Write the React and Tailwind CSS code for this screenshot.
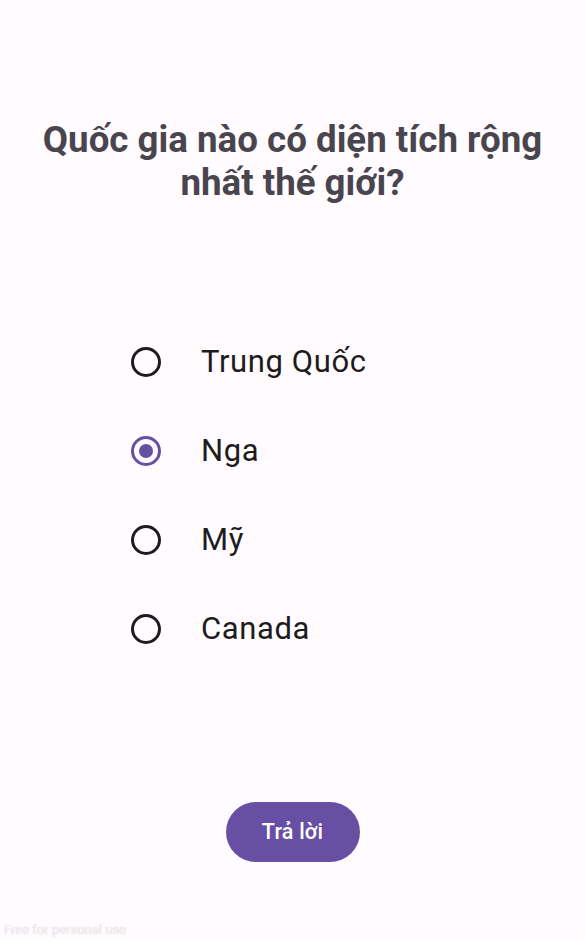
import { useState } from 'react';

const OPTIONS = ['Trung Quốc', 'Nga', 'Mỹ', 'Canada'];

function Radio({ checked }) {
  return (
    <span
      className={`flex h-[30px] w-[30px] items-center justify-center rounded-full border-[3px] ${
        checked ? 'border-[#6750a4]' : 'border-[#1d1b20]'
      }`}
    >
      {checked && <span className="h-[14px] w-[14px] rounded-full bg-[#6750a4]" />}
    </span>
  );
}

export default function App() {
  const [selected, setSelected] = useState('Nga');

  return (
    <div className="relative flex h-[940px] w-[585px] flex-col items-center bg-[#fffbfe] font-['Roboto',sans-serif]">
      <h1 className="mt-[118px] px-6 text-center text-[36.7px] font-bold leading-[43px] text-[#49454f]">
        Quốc gia nào có diện tích rộng nhất thế giới?
      </h1>

      <div className="mt-[142px] flex w-full flex-col gap-[58px] pl-[131px]">
        {OPTIONS.map((opt) => (
          <button
            key={opt}
            onClick={() => setSelected(opt)}
            className="flex h-[31px] items-center gap-[40px] text-left"
          >
            <Radio checked={selected === opt} />
            <span className="text-[31px] leading-[31px] tracking-[0.6px] text-[#1d1b20]">{opt}</span>
          </button>
        ))}
      </div>

      <button className="mt-[158px] h-[60px] w-[134px] rounded-full bg-[#6750a4] text-[21.5px] font-medium tracking-[0.2px] text-white">
        Trả lời
      </button>

      <div className="absolute bottom-[1px] left-[4px] text-[13px] text-[#f3f0f3] [text-shadow:0_0_1px_#cfcfcf]">
        Free for personal use
      </div>
    </div>
  );
}
